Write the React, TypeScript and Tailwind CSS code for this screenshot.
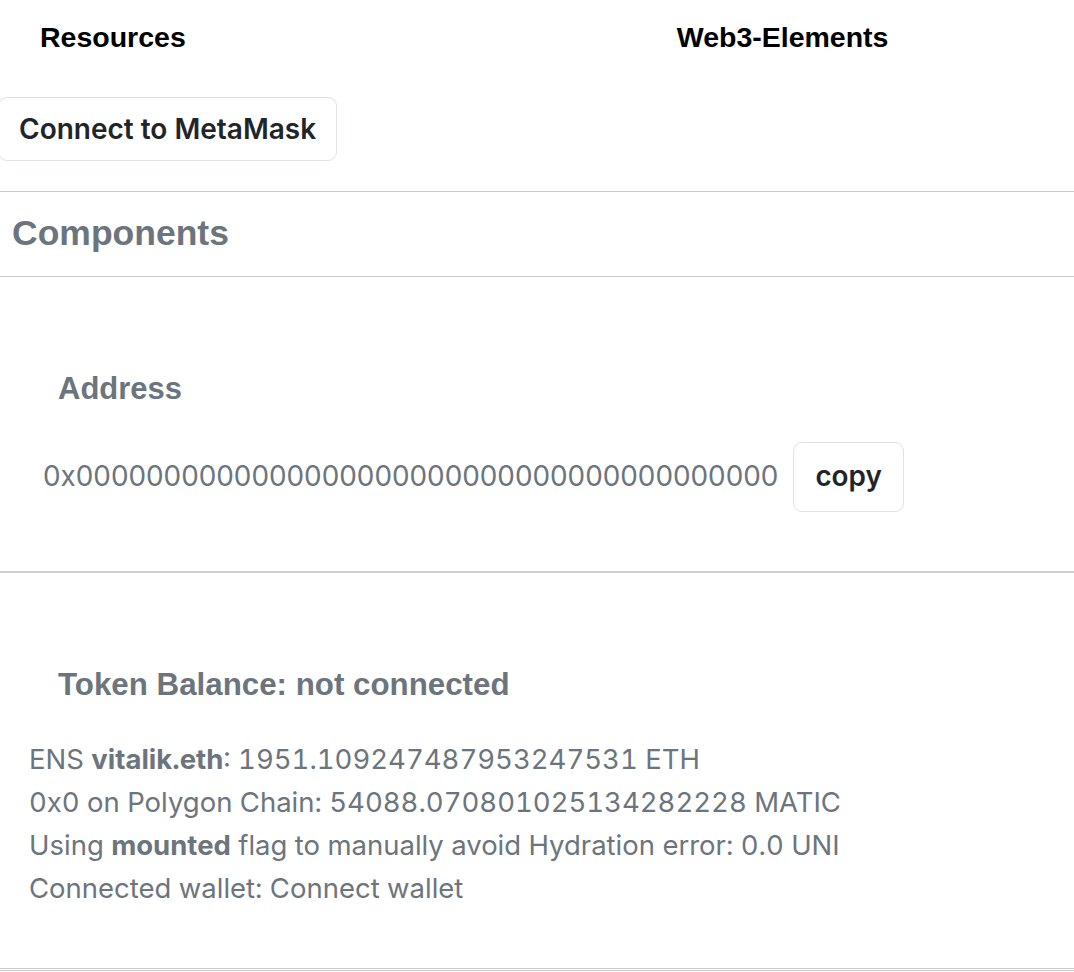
import React from 'react';

const heading = "font-['Liberation_Sans',Arial,sans-serif] font-bold";
const body = "font-['Inter','Noto_Sans',sans-serif]";

const balances = [
  { id: 'ens', content: (<>ENS <b className="font-bold">vitalik.eth</b>: 1951.109247487953247531 ETH</>) },
  { id: 'polygon', content: <>0x0 on Polygon Chain: 54088.070801025134282228 MATIC</> },
  { id: 'uni', content: (<>Using <b className="font-bold">mounted</b> flag to manually avoid Hydration error: 0.0 UNI</>) },
  { id: 'wallet', content: <>Connected wallet: Connect wallet</> },
];

export default function App() {
  return (
    <div className="min-h-[972px] w-full bg-white text-[#6c757d]">
      {/* top nav */}
      <nav className={`${heading} flex h-[74px] items-center text-[28.5px] text-black`}>
        <span className="ml-[40px]">Resources</span>
        <span className="ml-[491px]">Web3-Elements</span>
      </nav>

      <button
        className={`${body} ml-[-2px] mt-[23px] flex h-[64px] items-center rounded-[9px] border border-[#dee2e6] bg-white pl-[20px] pr-[20px] text-[28px] font-semibold text-[#212529]`}
      >
        Connect to MetaMask
      </button>

      <hr className="mt-[30px] border-t border-[#cccccc]" />
      <div className={`${heading} flex h-[84px] items-center pl-[12px] text-[35.5px]`}>Components</div>
      <hr className="border-t border-[#cccccc]" />

      {/* address */}
      <section className="pt-[92px]">
        <h5 className={`${heading} pl-[58px] text-[31px] leading-[40px]`}>Address</h5>
        <div className={`${body} mt-[33px] flex h-[70px] items-center pl-[43px] text-[27.85px]`}>
          <span>0x0000000000000000000000000000000000000000</span>
          <button className="ml-[15px] flex h-[70px] items-center rounded-[9px] border border-[#dee2e6] bg-white px-[21px] font-semibold text-[#212529]">
            copy
          </button>
        </div>
      </section>
      <hr className="mt-[59px] border-t-2 border-[#cccccc]" />

      {/* token balance */}
      <section className="h-[395px] pt-[92px]">
        <h5 className={`${heading} pl-[58px] text-[31.3px] leading-[40px]`}>Token Balance: not connected</h5>
        <div className={`${body} mt-[33px] pl-[29px] text-[27.5px] leading-[43px] tabular-nums`}>
          {balances.map((b) => (
            <div key={b.id}>{b.content}</div>
          ))}
        </div>
      </section>
      <div className="border-y border-[#cccccc] h-[3px] bg-white" />
    </div>
  );
}
